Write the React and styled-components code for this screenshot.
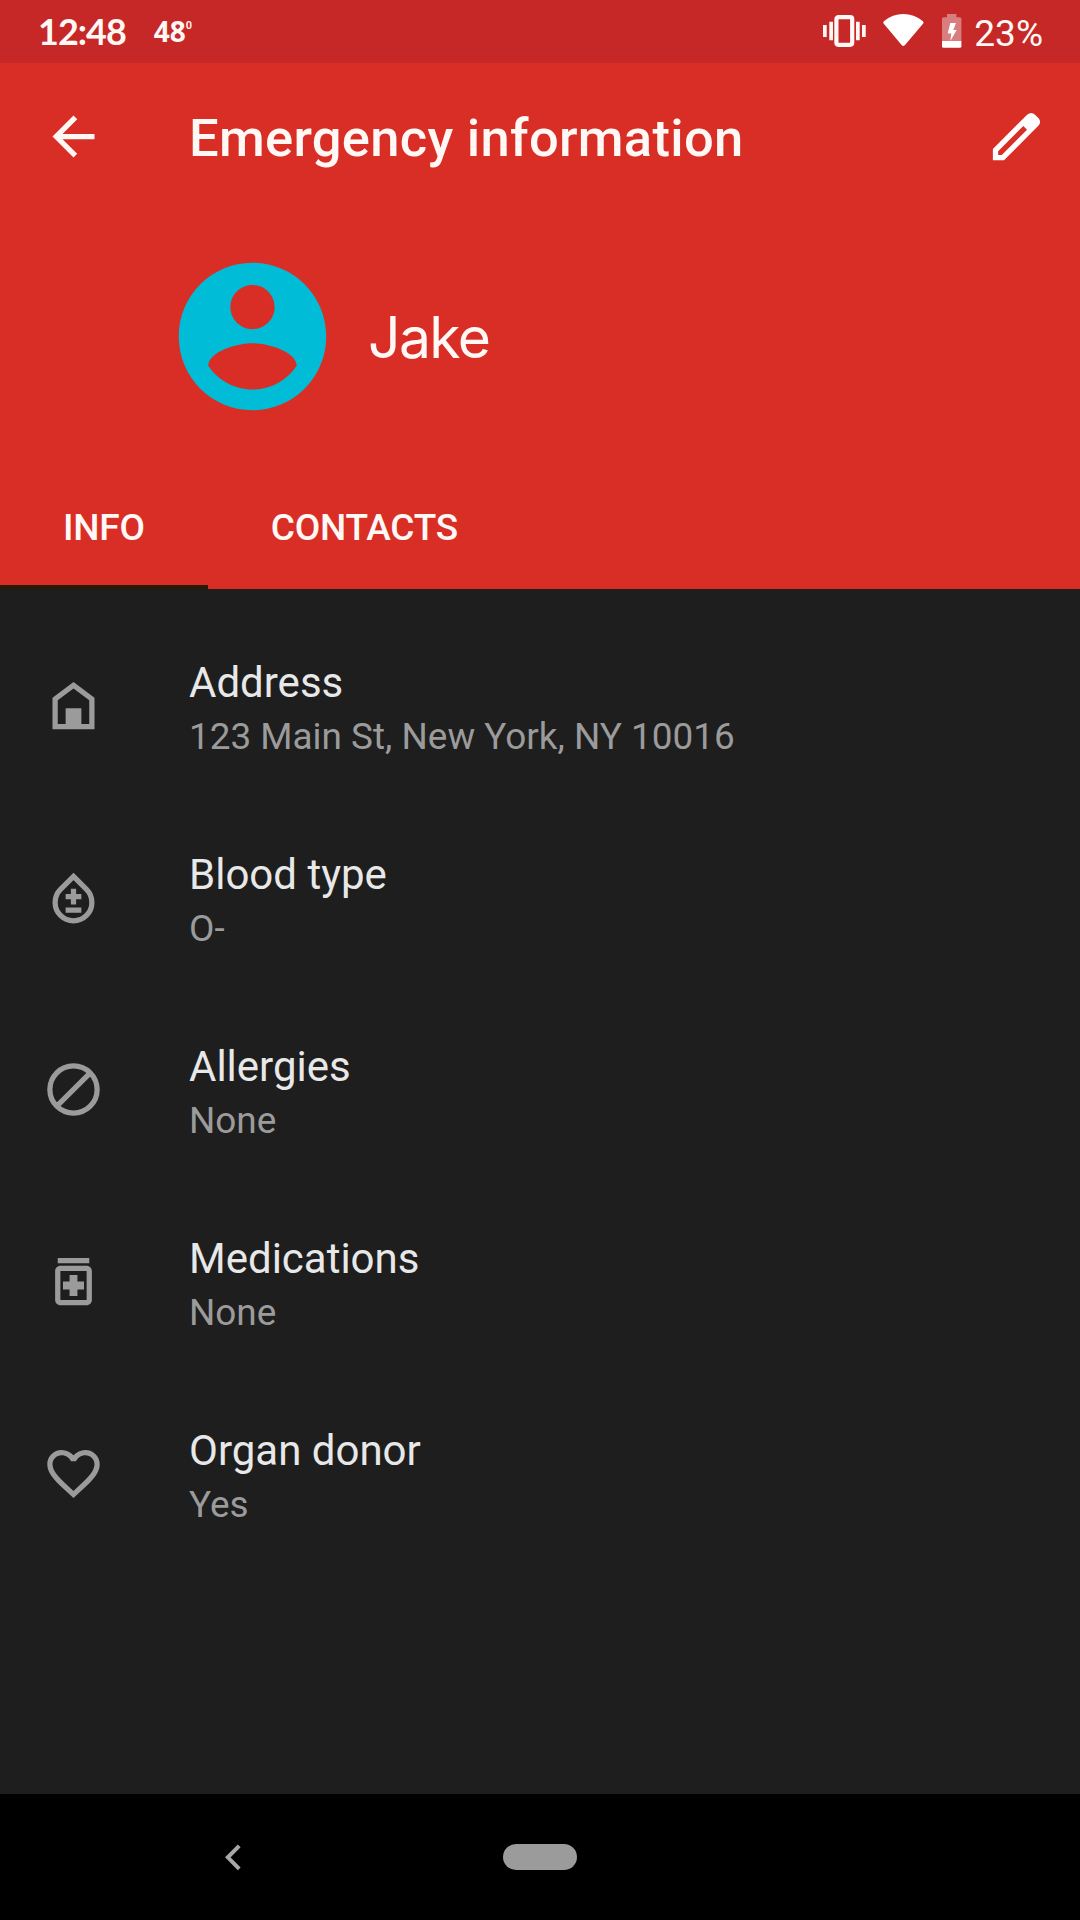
import React from "react";
import styled, { createGlobalStyle } from "styled-components";

const GlobalStyle = createGlobalStyle`
  body { margin: 0; background: #1e1e1e; }
  * { box-sizing: border-box; }
`;

const Screen = styled.div`
  width: 1080px;
  height: 1920px;
  display: flex;
  flex-direction: column;
  overflow: hidden;
  background: #1e1e1e;
  color: #fff8f5;
  font-family: Roboto, "Liberation Sans", sans-serif;
`;

const StatusBar = styled.div`
  height: 63px;
  flex: none;
  display: flex;
  justify-content: space-between;
  padding: 0 37px 0 38px;
  background: #c62828;
`;

const StatusGroup = styled.div`
  display: flex;
  align-items: flex-start;
`;

const Clock = styled.span`
  font: 700 36px/36px Lato, sans-serif;
  letter-spacing: -1px;
  margin-top: 13px;
`;

const Temperature = styled.span`
  display: flex;
  font: 700 28px/28px "Open Sans", sans-serif;
  margin: 17px 0 0 28px;
`;

const Degree = styled.span`
  font: 600 11px/12px Roboto, sans-serif;
  margin: 3px 0 0 0;
`;

const StatusIcon = styled.svg`
  display: block;
  flex: none;
  margin-top: ${(p) => p.$top}px;
  margin-right: ${(p) => p.$gap}px;
`;

const Percent = styled.span`
  font-size: 37px;
  line-height: 40px;
  margin-top: 14px;
`;

const Header = styled.header`
  height: 526px;
  flex: none;
  display: flex;
  flex-direction: column;
  background: #d92e25;
`;

const Toolbar = styled.div`
  height: 147px;
  display: flex;
  align-items: center;
  padding: 0 32px 1px 42px;
`;

const IconButton = styled.button`
  display: flex;
  padding: 0;
  border: 0;
  background: none;
  color: inherit;
`;

const Title = styled.h1`
  flex: 1;
  margin: 4px 0 0 84px;
  font-size: 52.5px;
  line-height: 60px;
  font-weight: 500;
  letter-spacing: 0.3px;
  white-space: nowrap;
`;

const Profile = styled.div`
  height: 252px;
  display: flex;
  align-items: center;
  padding-left: 164px;
`;

const Name = styled.span`
  margin: 3px 0 0 27px;
  font: 400 57px/64px Inter, sans-serif;
  letter-spacing: -1.6px;
`;

const Tabs = styled.nav`
  display: flex;
  flex: 1;
`;

const Tab = styled.div`
  display: flex;
  align-items: center;
  padding: 9px 63px 0;
  font-size: 37px;
  line-height: 44px;
  font-weight: 500;
  letter-spacing: -0.2px;
  border-bottom: 4px solid ${(p) => (p.$active ? "#2a1a05" : "transparent")};
`;

const List = styled.main`
  flex: 1;
  display: flex;
  flex-direction: column;
  padding-top: 20px;
`;

const Row = styled.div`
  height: 192px;
  display: flex;
  align-items: center;
  gap: 84px;
  padding-left: 42px;
  color: #9b9b9b;
`;

const Texts = styled.div`
  display: flex;
  flex-direction: column;
  margin-top: 9px;
`;

const Label = styled.span`
  color: #e8e8e8;
  font-size: 42px;
  line-height: 54px;
`;

const Value = styled.span`
  font-size: 36.9px;
  line-height: 53px;
`;

const NavBar = styled.footer`
  height: 126px;
  flex: none;
  display: grid;
  grid-template-columns: 466px 148px 466px;
  align-items: center;
  justify-items: center;
  background: #000;
`;

const HomePill = styled.div`
  width: 74px;
  height: 26px;
  border-radius: 13px;
  background: #9b9b9b;
`;

const Glyph = ({ size = 63, color = "currentColor", children }) => (
  <svg width={size} height={size} viewBox="0 0 24 24" fill={color} fillRule="evenodd">
    {children}
  </svg>
);

const rows = [
  {
    label: "Address",
    value: "123 Main St, New York, NY 10016",
    icon: <path d="M12 3L4 9v12h16V9zm6 16h-3v-6H9v6H6v-9l6-4.5 6 4.5z" />,
  },
  {
    label: "Blood type",
    value: "O-",
    icon: (
      <>
        <path
          d="M12 3.96L16.95 8.91A7 7 0 1 1 7.05 8.91Z"
          fill="none"
          stroke="currentColor"
          strokeWidth="2"
        />
        <path d="M11 8.7h2v2h2v2h-2v2h-2v-2H9v-2h2zM9 15.8h6v2H9z" />
      </>
    ),
  },
  {
    label: "Allergies",
    value: "None",
    icon: (
      <path
        d="M12 3a9 9 0 1 0 0 18 9 9 0 1 0 0-18zM5.64 18.36L18.36 5.64"
        fill="none"
        stroke="currentColor"
        strokeWidth="2"
      />
    ),
  },
  {
    label: "Medications",
    value: "None",
    icon: (
      <path d="M6 3h12v2H6zM17 6H7c-1.1 0-2 .9-2 2v11c0 1.1.9 2 2 2h10c1.1 0 2-.9 2-2V8c0-1.1-.9-2-2-2zm0 13H7V8h10zM10.5 9.5h3v2.5H16v3h-2.5v2.5h-3V15H8v-3h2.5z" />
    ),
  },
  {
    label: "Organ donor",
    value: "Yes",
    icon: (
      <path d="M16.5 3c-1.74 0-3.41.81-4.5 2.09C10.91 3.81 9.24 3 7.5 3 4.42 3 2 5.42 2 8.5c0 3.78 3.4 6.86 8.55 11.54L12 21.35l1.45-1.32C18.6 15.36 22 12.28 22 8.5 22 5.42 19.58 3 16.5 3zm-4.4 15.55l-.1.1-.1-.1C7.14 14.24 4 11.39 4 8.5 4 6.5 5.5 5 7.5 5c1.54 0 3.04.99 3.57 2.36h1.87C13.46 5.99 14.96 5 16.5 5c2 0 3.5 1.5 3.5 3.5 0 2.89-3.14 5.74-7.9 10.05z" />
    ),
  },
];

export default function App() {
  return (
    <Screen>
      <GlobalStyle />
      <StatusBar>
        <StatusGroup>
          <Clock>12:48</Clock>
          <Temperature>
            48<Degree>0</Degree>
          </Temperature>
        </StatusGroup>
        <StatusGroup>
          <StatusIcon $top={15} $gap={17} width="43" height="32" viewBox="0 0 43 32" fill="currentColor">
            <path d="M0 10h3.7v12H0zM6.3 6.7H10v18.6H6.3zM33 6.7h3.7v18.6H33zM39 10h3.7v12H39z" />
            <rect x="13.4" y="2.2" width="15.8" height="27.6" rx="2" fill="none" stroke="currentColor" strokeWidth="4.2" />
          </StatusIcon>
          <StatusIcon $top={14} $gap={18} width="41" height="32" viewBox="0 0 41 32" fill="#fff">
            <path d="M.8 9.8Q-.4 8.2 1.2 7Q9.5 0 20.3 0T39.6 7Q41.2 8.2 40 9.8L22 31Q20.3 32.8 18.6 31Z" />
          </StatusIcon>
          <StatusIcon $top={14} $gap={12} width="20" height="34" viewBox="0 0 20 34">
            <path d="M5 0h9.4v3.2h3.4q1.6 0 1.6 1.6V27H0V4.8Q0 3.2 1.6 3.2H5z" fill="#d97e7e" />
            <path d="M0 27h19.4v5.2q0 1.6-1.6 1.6H1.6Q0 33.8 0 32.2z" fill="#fff" />
            <path d="M8.3 9H14l-2.7 7h3.4L8.3 27l1-7.5H5.7z" fill="#fff" />
          </StatusIcon>
          <Percent>23%</Percent>
        </StatusGroup>
      </StatusBar>
      <Header>
        <Toolbar>
          <IconButton aria-label="Back">
            <Glyph>
              <path d="M20 11H7.83l5.59-5.59L12 4l-8 8 8 8 1.41-1.41L7.83 13H20v-2z" />
            </Glyph>
          </IconButton>
          <Title>Emergency information</Title>
          <IconButton aria-label="Edit">
            <Glyph color="#fff">
              <path d="M3 16.75V21h4.25L20.4 7.85a2 2 0 0 0 0-2.8l-1.45-1.45a2 2 0 0 0-2.8 0zM6.4 19H5v-1.4L14.6 8 16 9.4z" />
            </Glyph>
          </IconButton>
        </Toolbar>
        <Profile>
          <Glyph size={177} color="#00bcd6">
            <path d="M12 2C6.48 2 2 6.48 2 12s4.48 10 10 10 10-4.48 10-10S17.52 2 12 2zm0 3c1.66 0 3 1.34 3 3s-1.34 3-3 3-3-1.34-3-3 1.34-3 3-3zm0 14.2c-2.5 0-4.71-1.28-6-3.22.03-1.99 4-3.08 6-3.08 1.99 0 5.97 1.09 6 3.08-1.29 1.94-3.5 3.22-6 3.22z" />
          </Glyph>
          <Name>Jake</Name>
        </Profile>
        <Tabs>
          <Tab $active>INFO</Tab>
          <Tab>CONTACTS</Tab>
        </Tabs>
      </Header>
      <List>
        {rows.map((row) => (
          <Row key={row.label}>
            <Glyph>{row.icon}</Glyph>
            <Texts>
              <Label>{row.label}</Label>
              <Value>{row.value}</Value>
            </Texts>
          </Row>
        ))}
      </List>
      <NavBar>
        <svg width="16" height="27" viewBox="0 0 16 27" fill="none" stroke="#a8a8a8" strokeWidth="4">
          <path d="M14.2 1.8L2.8 13.3 14.2 24.8" />
        </svg>
        <HomePill />
      </NavBar>
    </Screen>
  );
}
